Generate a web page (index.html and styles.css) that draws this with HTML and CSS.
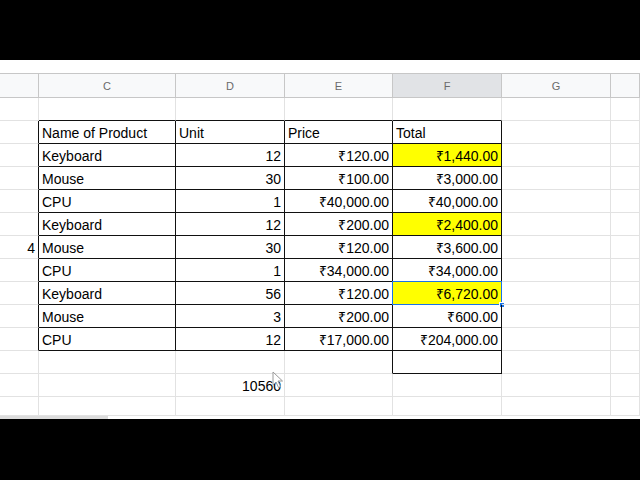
FILE: index.html
```html
<!DOCTYPE html>
<html>
<head>
<meta charset="utf-8">
<link rel="stylesheet" href="styles.css">
</head>
<body>
<div class="screen">
  <div class="topbar"></div>
  <div class="sheet">
    <div class="grid">
      <div class="h"></div><div class="h">C</div><div class="h">D</div><div class="h">E</div><div class="h hs">F</div><div class="h">G</div><div class="h"></div>

      <div class="c"></div><div class="c bb"></div><div class="c bb"></div><div class="c bb"></div><div class="c bb"></div><div class="c"></div><div class="c"></div>

      <div class="c br"></div><div class="c t">Name of Product</div><div class="c t">Unit</div><div class="c t">Price</div><div class="c t">Total</div><div class="c"></div><div class="c"></div>

      <div class="c br"></div><div class="c t">Keyboard</div><div class="c t n">12</div><div class="c t n">₹120.00</div><div class="c t n y">₹1,440.00</div><div class="c"></div><div class="c"></div>

      <div class="c br"></div><div class="c t">Mouse</div><div class="c t n">30</div><div class="c t n">₹100.00</div><div class="c t n">₹3,000.00</div><div class="c"></div><div class="c"></div>

      <div class="c br"></div><div class="c t">CPU</div><div class="c t n">1</div><div class="c t n">₹40,000.00</div><div class="c t n">₹40,000.00</div><div class="c"></div><div class="c"></div>

      <div class="c br"></div><div class="c t">Keyboard</div><div class="c t n">12</div><div class="c t n">₹200.00</div><div class="c t n y">₹2,400.00</div><div class="c"></div><div class="c"></div>

      <div class="c br n">4</div><div class="c t">Mouse</div><div class="c t n">30</div><div class="c t n">₹120.00</div><div class="c t n">₹3,600.00</div><div class="c"></div><div class="c"></div>

      <div class="c br"></div><div class="c t">CPU</div><div class="c t n">1</div><div class="c t n">₹34,000.00</div><div class="c t n">₹34,000.00</div><div class="c"></div><div class="c"></div>

      <div class="c br"></div><div class="c t">Keyboard</div><div class="c t n">56</div><div class="c t n">₹120.00</div><div class="c t n y sel">₹6,720.00<span class="selbox"></span><span class="handle"></span></div><div class="c"></div><div class="c"></div>

      <div class="c br"></div><div class="c t">Mouse</div><div class="c t n">3</div><div class="c t n">₹200.00</div><div class="c t n">₹600.00</div><div class="c"></div><div class="c"></div>

      <div class="c br"></div><div class="c t">CPU</div><div class="c t n">12</div><div class="c t n">₹17,000.00</div><div class="c t n">₹204,000.00</div><div class="c"></div><div class="c"></div>

      <div class="c"></div><div class="c"></div><div class="c"></div><div class="c br"></div><div class="c t"></div><div class="c"></div><div class="c"></div>

      <div class="c"></div><div class="c"></div><div class="c n cur">10560<svg class="cursor" width="12" height="18" viewBox="0 0 12 18"><path d="M1 1 L1 14 L4 11 L6.5 16.5 L8.5 15.5 L6 10 L10.5 10 Z" fill="#fff" stroke="#9a9a9a" stroke-width="1"/></svg></div><div class="c"></div><div class="c"></div><div class="c"></div><div class="c"></div>

      <div class="c"></div><div class="c"></div><div class="c"></div><div class="c"></div><div class="c"></div><div class="c"></div><div class="c"></div>
    </div>
    <div class="scroll"><div class="thumb"></div></div>
  </div>
</div>
</body>
</html>
```

FILE: styles.css
```css
* { box-sizing: border-box; }
html, body { margin: 0; padding: 0; background: #000; }
.screen {
  width: 640px;
  height: 480px;
  display: flex;
  flex-direction: column;
  background: #000;
  overflow: hidden;
}
.topbar { height: 60px; flex: none; }
.sheet {
  height: 359px;
  flex: none;
  background: #fff;
  padding-top: 13px;
  display: flex;
  flex-direction: column;
}
.grid {
  flex: 1;
  display: grid;
  grid-template-columns: 39px 137px 109px 108px 109px 109px 1fr;
  grid-template-rows: 25px repeat(13, 23px) 1fr;
  font-family: "Liberation Sans", Arial, sans-serif;
  font-size: 14px;
  color: #000;
  overflow: hidden;
}
.h {
  background: #f8f9fa;
  border-top: 1px solid #c7c7c7;
  border-right: 1px solid #c7c7c7;
  border-bottom: 1px solid #c7c7c7;
  color: #6a6a6a;
  font-size: 11px;
  display: flex;
  align-items: center;
  justify-content: center;
}
.hs { background: #e1e3e6; }
.c {
  border-right: 1px solid #e2e2e2;
  border-bottom: 1px solid #e2e2e2;
  display: flex;
  align-items: center;
  padding: 1px 3px 0 3px;
  white-space: nowrap;
  position: relative;
}
.t { border-right-color: #111; border-bottom-color: #111; }
.bb { border-bottom-color: #111; }
.br { border-right-color: #111; }
.n { justify-content: flex-end; }
.y { background: #ffff00; }
.selbox {
  position: absolute;
  left: -1px; top: -1px; right: -1px; bottom: -1px;
  border: 1px solid #1a73e8;
}
.handle {
  position: absolute;
  right: -4px; bottom: -4px;
  width: 6px; height: 6px;
  background: #1a73e8;
  border: 1px solid #fff;
}
.cursor {
  position: absolute;
  left: 96px;
  top: -3px;
}
.scroll {
  height: 3px;
  flex: none;
  background: #fff;
}
.thumb {
  width: 108px;
  height: 3px;
  background: #dcdcdc;
}
```
